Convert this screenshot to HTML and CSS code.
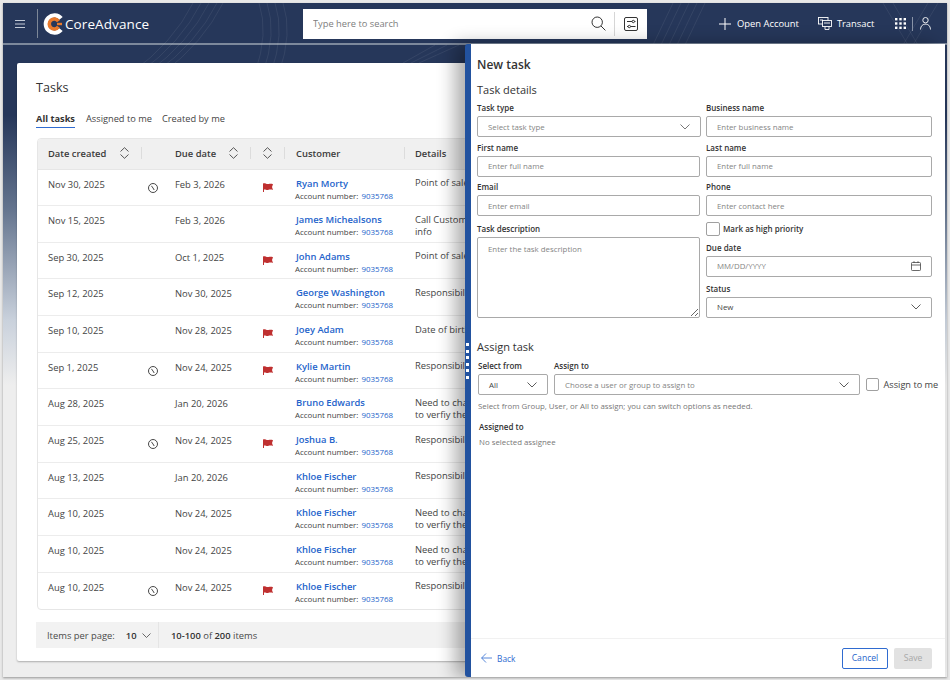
FILE: index.html
```html
<!DOCTYPE html>
<html lang="en">
<head>
<meta charset="utf-8">
<title>Tasks</title>
<link rel="stylesheet" href="styles.css">
</head>
<body>
<div class="frame">
  <svg class="waves" width="944" height="70" viewBox="0 0 944 70" fill="none" stroke="#ffffff" stroke-opacity=".07">
    <path d="M128 70 Q170 40 190 0M136 70 Q178 40 198 0M144 70 Q186 40 206 0M152 70 Q194 40 214 0M160 70 Q200 40 220 0"/>
    <path d="M252 70 Q266 30 256 0M260 70 Q274 30 264 0M268 70 Q282 30 272 0M276 70 Q290 30 280 0"/>
    <path d="M400 60 L432 42M408 60 L444 42M416 60 L456 42"/>
    <path d="M650 42 L670 0M658 42 L678 0M666 42 L686 0M674 42 L694 0M682 42 L702 0"/>
    <path d="M880 0 L905 42M890 0 L915 42M925 0 L900 42M935 0 L910 42"/>
  </svg>
  <header class="topbar">
    <div class="brand">
      <svg class="menu-icon" width="10" height="8" viewBox="0 0 10 8" stroke="#c3cad6" stroke-width="1"><path d="M0 .5H10M0 4H10M0 7.5H10"/></svg>
      <span class="brand-sep"></span>
      <svg class="logo" width="22" height="22" viewBox="0 0 22 22" fill="none">
        <path d="M18 5.4A8.6 8.6 0 1 0 18 16.6" stroke="#fff" stroke-width="4.4"/>
        <path d="M15.4 8.2A5 5 0 1 0 15.4 13.8" stroke="#e8792b" stroke-width="3.6"/>
        <path d="M14 11H19" stroke="#e8792b" stroke-width="2.4"/>
      </svg>
      <span class="brand-name">CoreAdvance</span>
    </div>
    <div class="search">
      <input class="search-input" type="text" placeholder="Type here to search">
      <svg class="search-icon" width="15" height="15" viewBox="0 0 15 15" fill="none" stroke="#333" stroke-width="1"><circle cx="6.2" cy="6.2" r="5.2"/><path d="M10 10L14.4 14.4"/></svg>
      <span class="search-sep"></span>
      <svg class="filter-icon" width="14" height="14" viewBox="0 0 14 14" fill="none" stroke="#333" stroke-width="1"><rect x=".5" y=".5" width="13" height="13" rx="1.5"/><path d="M3 4.5H8M10.6 4.5H11.5M3 9.5H4M6.6 9.5H11.5"/><circle cx="9.3" cy="4.5" r="1.2"/><circle cx="5.3" cy="9.5" r="1.2"/></svg>
    </div>
    <nav class="actions">
      <a class="action action-open">
        <svg width="12" height="12" viewBox="0 0 12 12" stroke="#fff" stroke-width="1"><path d="M6 0V12M0 6H12"/></svg>
        Open Account
      </a>
      <a class="action action-transact">
        <svg width="14" height="13" viewBox="0 0 14 13" fill="none" stroke="#fff" stroke-width=".9"><rect x=".5" y=".5" width="9.5" height="6.5"/><rect x="4.5" y="3.5" width="9" height="6" fill="#26375a"/><path d="M2 3H5M6 6H12M7 9.5V12.5H11V9.5"/></svg>
        Transact
      </a>
      <svg class="apps" width="11" height="11" viewBox="0 0 11 11" fill="#fff"><rect width="2.4" height="2.4"/><rect x="4.3" width="2.4" height="2.4"/><rect x="8.6" width="2.4" height="2.4"/><rect y="4.3" width="2.4" height="2.4"/><rect x="4.3" y="4.3" width="2.4" height="2.4"/><rect x="8.6" y="4.3" width="2.4" height="2.4"/><rect y="8.6" width="2.4" height="2.4"/><rect x="4.3" y="8.6" width="2.4" height="2.4"/><rect x="8.6" y="8.6" width="2.4" height="2.4"/></svg>
      <span class="action-sep"></span>
      <svg class="user" width="11" height="13" viewBox="0 0 11 13" fill="none" stroke="#fff" stroke-width=".9"><circle cx="5.5" cy="3.2" r="2.7"/><path d="M.5 12.5C.8 8.5 3 7.2 5.5 7.2S10.2 8.5 10.5 12.5"/></svg>
    </nav>
  </header>

  <main class="backdrop">
    <section class="card">
      <h1 class="card-title">Tasks</h1>
      <div class="tabs">
        <span class="tab tab-active">All tasks</span>
        <span class="tab">Assigned to me</span>
        <span class="tab">Created by me</span>
      </div>
      <div class="table">
        <div class="thead">
          <div class="th th-created">Date created <svg class="sort" width="9" height="12" viewBox="0 0 9 12" fill="none" stroke="#444" stroke-width=".9"><path d="M.5 4.5L4.5 .7L8.5 4.5M.5 7.5L4.5 11.3L8.5 7.5"/></svg></div>
          <div class="th th-due">Due date <svg class="sort" width="9" height="12" viewBox="0 0 9 12" fill="none" stroke="#444" stroke-width=".9"><path d="M.5 4.5L4.5 .7L8.5 4.5M.5 7.5L4.5 11.3L8.5 7.5"/></svg></div>
          <div class="th th-flag"><svg class="sort" width="9" height="12" viewBox="0 0 9 12" fill="none" stroke="#444" stroke-width=".9"><path d="M.5 4.5L4.5 .7L8.5 4.5M.5 7.5L4.5 11.3L8.5 7.5"/></svg></div>
          <div class="th th-customer">Customer</div>
          <div class="th th-details">Details</div>
        </div>

        <div class="row"><div class="td">Nov 30, 2025</div><div class="td-icon"><svg class="clock" width="10" height="10" viewBox="0 0 10 10" fill="none" stroke="#333" stroke-width=".9"><circle cx="5" cy="5" r="4.5"/><path d="M3.4 2.8L5 5L6.2 7"/></svg></div><div class="td">Feb 3, 2026</div><div class="td-icon td-flag"><svg class="flag" width="10" height="9" viewBox="0 0 10 9"><path d="M0 0.6C2-.4 3.5 1.4 5.5 1C7 .8 8.5.6 10 1.2L9 4L10 7C8 6.4 6.5 6.6 5 7C3.4 7.3 2 6 1 6.6V9H0Z" fill="#bf3030"/></svg></div><div class="td-cust"><a class="name">Ryan Morty</a><div class="acct">Account number: <a class="acct-no">9035768</a></div></div><div class="td-detail">Point of sale</div></div>

        <div class="row"><div class="td">Nov 15, 2025</div><div class="td-icon"></div><div class="td">Feb 3, 2026</div><div class="td-icon td-flag"></div><div class="td-cust"><a class="name">James Michealsons</a><div class="acct">Account number: <a class="acct-no">9035768</a></div></div><div class="td-detail">Call Customer<br>info</div></div>

        <div class="row"><div class="td">Sep 30, 2025</div><div class="td-icon"></div><div class="td">Oct 1, 2025</div><div class="td-icon td-flag"><svg class="flag" width="10" height="9" viewBox="0 0 10 9"><path d="M0 0.6C2-.4 3.5 1.4 5.5 1C7 .8 8.5.6 10 1.2L9 4L10 7C8 6.4 6.5 6.6 5 7C3.4 7.3 2 6 1 6.6V9H0Z" fill="#bf3030"/></svg></div><div class="td-cust"><a class="name">John Adams</a><div class="acct">Account number: <a class="acct-no">9035768</a></div></div><div class="td-detail">Point of sale</div></div>

        <div class="row"><div class="td">Sep 12, 2025</div><div class="td-icon"></div><div class="td">Nov 30, 2025</div><div class="td-icon td-flag"></div><div class="td-cust"><a class="name">George Washington</a><div class="acct">Account number: <a class="acct-no">9035768</a></div></div><div class="td-detail">Responsibility</div></div>

        <div class="row"><div class="td">Sep 10, 2025</div><div class="td-icon"></div><div class="td">Nov 28, 2025</div><div class="td-icon td-flag"><svg class="flag" width="10" height="9" viewBox="0 0 10 9"><path d="M0 0.6C2-.4 3.5 1.4 5.5 1C7 .8 8.5.6 10 1.2L9 4L10 7C8 6.4 6.5 6.6 5 7C3.4 7.3 2 6 1 6.6V9H0Z" fill="#bf3030"/></svg></div><div class="td-cust"><a class="name">Joey Adam</a><div class="acct">Account number: <a class="acct-no">9035768</a></div></div><div class="td-detail">Date of birth</div></div>

        <div class="row"><div class="td">Sep 1, 2025</div><div class="td-icon"><svg class="clock" width="10" height="10" viewBox="0 0 10 10" fill="none" stroke="#333" stroke-width=".9"><circle cx="5" cy="5" r="4.5"/><path d="M3.4 2.8L5 5L6.2 7"/></svg></div><div class="td">Nov 24, 2025</div><div class="td-icon td-flag"><svg class="flag" width="10" height="9" viewBox="0 0 10 9"><path d="M0 0.6C2-.4 3.5 1.4 5.5 1C7 .8 8.5.6 10 1.2L9 4L10 7C8 6.4 6.5 6.6 5 7C3.4 7.3 2 6 1 6.6V9H0Z" fill="#bf3030"/></svg></div><div class="td-cust"><a class="name">Kylie Martin</a><div class="acct">Account number: <a class="acct-no">9035768</a></div></div><div class="td-detail">Responsibility</div></div>

        <div class="row"><div class="td">Aug 28, 2025</div><div class="td-icon"></div><div class="td">Jan 20, 2026</div><div class="td-icon td-flag"></div><div class="td-cust"><a class="name">Bruno Edwards</a><div class="acct">Account number: <a class="acct-no">9035768</a></div></div><div class="td-detail">Need to change<br>to verfiy the</div></div>

        <div class="row"><div class="td">Aug 25, 2025</div><div class="td-icon"><svg class="clock" width="10" height="10" viewBox="0 0 10 10" fill="none" stroke="#333" stroke-width=".9"><circle cx="5" cy="5" r="4.5"/><path d="M3.4 2.8L5 5L6.2 7"/></svg></div><div class="td">Nov 24, 2025</div><div class="td-icon td-flag"><svg class="flag" width="10" height="9" viewBox="0 0 10 9"><path d="M0 0.6C2-.4 3.5 1.4 5.5 1C7 .8 8.5.6 10 1.2L9 4L10 7C8 6.4 6.5 6.6 5 7C3.4 7.3 2 6 1 6.6V9H0Z" fill="#bf3030"/></svg></div><div class="td-cust"><a class="name">Joshua B.</a><div class="acct">Account number: <a class="acct-no">9035768</a></div></div><div class="td-detail">Responsibility</div></div>

        <div class="row"><div class="td">Aug 13, 2025</div><div class="td-icon"></div><div class="td">Jan 20, 2026</div><div class="td-icon td-flag"></div><div class="td-cust"><a class="name">Khloe Fischer</a><div class="acct">Account number: <a class="acct-no">9035768</a></div></div><div class="td-detail">Responsibility</div></div>

        <div class="row"><div class="td">Aug 10, 2025</div><div class="td-icon"></div><div class="td">Nov 24, 2025</div><div class="td-icon td-flag"></div><div class="td-cust"><a class="name">Khloe Fischer</a><div class="acct">Account number: <a class="acct-no">9035768</a></div></div><div class="td-detail">Need to change<br>to verfiy the</div></div>

        <div class="row"><div class="td">Aug 10, 2025</div><div class="td-icon"></div><div class="td">Nov 24, 2025</div><div class="td-icon td-flag"></div><div class="td-cust"><a class="name">Khloe Fischer</a><div class="acct">Account number: <a class="acct-no">9035768</a></div></div><div class="td-detail">Need to change<br>to verfiy the</div></div>

        <div class="row row-last"><div class="td">Aug 10, 2025</div><div class="td-icon"><svg class="clock" width="10" height="10" viewBox="0 0 10 10" fill="none" stroke="#333" stroke-width=".9"><circle cx="5" cy="5" r="4.5"/><path d="M3.4 2.8L5 5L6.2 7"/></svg></div><div class="td">Nov 24, 2025</div><div class="td-icon td-flag"><svg class="flag" width="10" height="9" viewBox="0 0 10 9"><path d="M0 0.6C2-.4 3.5 1.4 5.5 1C7 .8 8.5.6 10 1.2L9 4L10 7C8 6.4 6.5 6.6 5 7C3.4 7.3 2 6 1 6.6V9H0Z" fill="#bf3030"/></svg></div><div class="td-cust"><a class="name">Khloe Fischer</a><div class="acct">Account number: <a class="acct-no">9035768</a></div></div><div class="td-detail">Responsibility</div></div>
      </div>
      <div class="pager">
        <div class="pager-size">Items per page: <b class="pager-num">10</b>
          <svg width="9" height="5" viewBox="0 0 9 5" fill="none" stroke="#444" stroke-width=".8"><path d="M.5 .5L4.5 4.5L8.5 .5"/></svg>
        </div>
        <div class="pager-count"><b>10-100</b> of <b>200</b> items</div>
      </div>
    </section>
  </main>

  <aside class="panel">
    <span class="grip"><i></i><i></i><i></i><i></i><i></i><i></i></span>
    <div class="panel-body">
      <h2 class="panel-title">New task</h2>
      <h3 class="section-title">Task details</h3>
      <div class="form-grid">
        <div class="field"><label class="label">Task type</label>
          <div class="control select select-wide"><span class="ph">Select task type</span><svg width="10" height="6" viewBox="0 0 10 6" fill="none" stroke="#555" stroke-width=".8"><path d="M.5 .5L5 5L9.5 .5"/></svg></div></div>
        <div class="field"><label class="label">Business name</label><input class="control input" type="text" placeholder="Enter business name"></div>
        <div class="field"><label class="label">First name</label><input class="control input" type="text" placeholder="Enter full name"></div>
        <div class="field"><label class="label">Last name</label><input class="control input" type="text" placeholder="Enter full name"></div>
        <div class="field"><label class="label">Email</label><input class="control input" type="text" placeholder="Enter email"></div>
        <div class="field"><label class="label">Phone</label><input class="control input" type="text" placeholder="Enter contact here"></div>
        <div class="field field-desc"><label class="label">Task description</label><textarea class="control textarea" placeholder="Enter the task description"></textarea></div>
        <div class="field-stack">
          <div class="check-row"><span class="checkbox"></span><span class="label">Mark as high priority</span></div>
          <div class="field"><label class="label">Due date</label>
            <div class="control select"><span class="ph">MM/DD/YYYY</span><svg width="10" height="10" viewBox="0 0 10 10" fill="none" stroke="#444" stroke-width=".8"><rect x=".5" y="1.5" width="9" height="8" rx=".8"/><path d="M.5 4H9.5M3 .2V2M7 .2V2"/></svg></div></div>
          <div class="field field-status"><label class="label">Status</label>
            <div class="control select"><span class="val">New</span><svg width="10" height="6" viewBox="0 0 10 6" fill="none" stroke="#333" stroke-width=".8"><path d="M.5 .5L5 5L9.5 .5"/></svg></div></div>
        </div>
      </div>

      <h3 class="section-title section-assign">Assign task</h3>
      <div class="assign-row">
        <div class="field field-from"><label class="label">Select from</label>
          <div class="control select"><span class="val">All</span><svg width="10" height="6" viewBox="0 0 10 6" fill="none" stroke="#333" stroke-width=".8"><path d="M.5 .5L5 5L9.5 .5"/></svg></div></div>
        <div class="field field-to"><label class="label">Assign to</label>
          <div class="control select"><span class="ph">Choose a user or group to assign to</span><svg width="10" height="6" viewBox="0 0 10 6" fill="none" stroke="#333" stroke-width=".8"><path d="M.5 .5L5 5L9.5 .5"/></svg></div></div>
        <div class="assign-me"><span class="checkbox checkbox-sm"></span><span class="assign-text">Assign to me</span></div>
      </div>
      <p class="help">Select from Group, User, or All to assign; you can switch options as needed.</p>
      <div class="assigned">
        <div class="label">Assigned to</div>
        <div class="none">No selected assignee</div>
      </div>
    </div>
    <footer class="panel-foot">
      <a class="back"><svg width="11" height="10" viewBox="0 0 11 10" fill="none" stroke="#2f6bd0" stroke-width=".8"><path d="M5 .5L.6 5L5 9.5M.6 5H11"/></svg>Back</a>
      <div class="foot-btns">
        <button class="btn btn-cancel" type="button">Cancel</button>
        <button class="btn btn-save" type="button">Save</button>
      </div>
    </footer>
  </aside>
</div>
</body>
</html>
```

FILE: styles.css
```css
* { box-sizing: border-box; }
html, body { margin: 0; padding: 0; height: 100%; overflow: hidden; }
body {
  background: #e8e8e8;
  font-family: "Open Sans", "Noto Sans", sans-serif;
  color: #333;
  padding: 3px;
}
.frame {
  position: relative;
  width: 944px;
  height: 674px;
  overflow: hidden;
  background: #eeeeee;
  box-shadow: 0 1px 2px rgba(0,0,0,.35);
  display: flex;
  flex-direction: column;
}
.waves { position: absolute; left: 0; top: 0; z-index: 1; pointer-events: none; }

/* header */
.topbar {
  flex: none;
  height: 42px;
  background: #26375a;
  border-bottom: 2px solid #7d899c;
  display: flex;
  align-items: center;
  padding: 1px 0 0 12px;
  position: relative;
}
.brand { display: flex; align-items: center; width: 288px; flex: none; }
.menu-icon { flex: none; }
.brand-sep { width: 1px; height: 29px; background: #7d8898; margin: 0 5px 0 12px; }
.logo { flex: none; }
.brand-name { color: #fff; font-size: 13.5px; margin-left: 0; letter-spacing: .1px; white-space: nowrap; }
.search {
  position: relative;
  z-index: 2;
  width: 344px;
  height: 30px;
  background: #fff;
  display: flex;
  align-items: center;
  flex: none;
}
.search-input {
  flex: 1;
  min-width: 0;
  height: 100%;
  border: 0;
  outline: 0;
  background: transparent;
  padding: 0 0 0 10px;
  font: 9.3px "Open Sans", sans-serif;
}
.search-input::placeholder { color: #7d7d7d; opacity: 1; }
.search-icon { flex: none; margin-right: 8px; }
.search-sep { width: 1px; height: 24px; background: #d6d6d6; margin-right: 9px; }
.filter-icon { flex: none; margin-right: 9px; }
.actions { display: flex; align-items: center; margin-left: 72px; color: #fff; font-size: 9.4px; position: relative; z-index: 2; }
.action { display: flex; align-items: center; white-space: nowrap; font-weight: 500; }
.action svg { margin-right: 6px; }
.action-open { margin-right: 19px; }
.action-transact svg { margin-right: 5px; }
.action-transact { margin-right: 21px; }
.action-sep { width: 1px; height: 14px; background: #8994a8; margin: 0 7px 0 6px; }

/* backdrop + card */
.backdrop {
  flex: 1;
  min-height: 0;
  padding: 18px 12px 16px 14px;
  background: linear-gradient(#26375a 0, #26375a 70px, #65758f 165px, #c9d1dc 275px, #eeeeee 340px);
}
.card {
  position: relative;
  height: 598px;
  background: #fff;
  border-radius: 2px;
  box-shadow: 0 1px 2px rgba(0,0,0,.28);
  padding: 14px 0 0 19px;
}
.card-title { margin: 0; font-size: 12.6px; line-height: 22px; font-weight: 500; color: #333; }
.tabs { display: flex; gap: 10px; margin-top: 9px; height: 20px; font-size: 9.25px; }
.tab { color: #444; line-height: 21px; height: 20px; }
.tab-active { font-weight: 700; color: #333; border-bottom: 1px solid #2f6bd0; margin-right: 1px; }

.table {
  margin: 10px 0 0 1px;
  width: 880px;
  height: 472px;
  border: 1px solid #e6e6e6;
  border-radius: 4px;
  overflow: hidden;
}
.thead, .row {
  display: grid;
  grid-template-columns: 103px 34px 75px 34px 120px 1fr;
}
.thead {
  height: 31.5px;
  background: #f0f0f0;
  border-bottom: 1px solid #e6e6e6;
  font-size: 9.4px;
  font-weight: 600;
  color: #3b3b3b;
  align-items: center;
  margin-top: -1px;
}
.th { height: 12px; display: flex; align-items: center; white-space: nowrap; justify-content: space-between; border-left: 1px solid #dcdcdc; }
.th-created { padding: 0 12px 0 10px; border-left: 0; }
.th-due { grid-column: 2 / 4; padding: 0 12px 0 33px; }
.th-flag { padding: 0 11px; justify-content: center; }
.th-customer { padding-left: 11px; }
.th-details { padding-left: 10px; }

.row {
  height: 36.67px;
  border-bottom: 1px solid #ececec;
  font-size: 9.4px;
  color: #444;
  padding-top: 7px;
}
.row-last { border-bottom: 0; }
.td { padding-left: 10px; line-height: 15px; white-space: nowrap; }
.td + .td-icon + .td { padding-left: 0; }
.td-icon { padding: 6px 0 0 7px; line-height: 0; }
.td-flag { padding-left: 13px; }
.td-cust { padding-left: 12px; white-space: nowrap; margin-top: -1px; }
.name { display: block; color: #2464cb; font-weight: 600; line-height: 15px; font-size: 9.4px; }
.acct { font-size: 7.9px; line-height: 11px; color: #444; margin-left: -1px; }
.acct-no { color: #2464cb; margin-left: 1px; }
.td-detail { padding-left: 11px; line-height: 12.5px; white-space: nowrap; padding-top: .5px; }

.pager {
  margin: 12px 0 0 0;
  width: 880px;
  height: 26px;
  background: #f2f2f2;
  display: flex;
  align-items: center;
  font-size: 9.4px;
  color: #4a4a4a;
}
.pager-size { width: 123px; height: 100%; padding-left: 11px; display: flex; align-items: center; border-right: 1px solid #e5e5e5; white-space: nowrap; }
.pager-num { font-weight: 600; color: #333; margin: 0 5px 0 11px; }
.pager-count { padding-left: 12px; white-space: nowrap; }
.pager-count b { font-weight: 600; color: #333; }

/* side panel */
.panel {
  position: absolute;
  z-index: 3;
  top: 41px;
  left: 462px;
  width: 480px;
  height: 633px;
  background: #fff;
  border-left: 6px solid #22529f;
  border-radius: 3px 0 0 3px;
  box-shadow: -10px 0 18px rgba(0,0,0,.32);
  display: flex;
  flex-direction: column;
}
.grip {
  position: absolute;
  left: -5px;
  top: 299px;
  display: flex;
  flex-direction: column;
  gap: 3.6px;
}
.grip i { display: block; width: 3px; height: 3px; background: #fff; }
.panel-body { flex: 1; min-height: 0; padding: 11px 13px 0 6px; }
.panel-title { margin: 0; font-size: 12px; line-height: 20px; font-weight: 600; color: #333; }
.section-title { margin: 6px 0 0; font-size: 11px; line-height: 18px; font-weight: 500; color: #333; }
.form-grid {
  display: grid;
  grid-template-columns: 223px 226px;
  column-gap: 6px;
  row-gap: 1.5px;
}
.field { display: flex; flex-direction: column; }
.label { font-size: 8px; line-height: 17px; height: 17px; font-weight: 600; color: #333; white-space: nowrap; }
.control {
  width: 100%;
  height: 21px;
  border: 1px solid #a9a9a9;
  border-radius: 2px;
  background: #fff;
  font: 7.85px "Open Sans", sans-serif;
  padding: 0 10px;
  outline: 0;
  color: #444;
}
.input::placeholder, .textarea::placeholder { color: #858585; opacity: 1; }
.select { display: flex; align-items: center; justify-content: space-between; }
.select-wide { width: 224px; }
.ph { color: #858585; }
.val { color: #444; }
.field-desc { margin-top: 2.5px; }
.textarea { height: 81px; display: block; padding: 6px 10px; resize: both; }
.field-stack { display: flex; flex-direction: column; margin-top: 2.5px; }
.check-row { display: flex; align-items: center; gap: 3px; height: 17px; margin-bottom: 1.5px; }
.checkbox { width: 14px; height: 14px; border: 1px solid #a0a0a0; border-radius: 2px; background: #fff; flex: none; }
.field-status { margin-top: 3px; }
.section-assign { margin: 20px 0 1px; }
.assign-row { display: flex; align-items: flex-end; }
.field-from { width: 70px; margin-left: 1px; margin-right: 6px; flex: none; }
.field-to { width: 306px; margin-right: 5.5px; flex: none; }
.assign-me { display: flex; align-items: center; height: 21px; gap: 5px; }
.checkbox-sm { width: 13px; height: 13px; }
.assign-text { font-size: 9.2px; color: #444; white-space: nowrap; }
.help { margin: 5px 0 0 1px; font-size: 7.85px; line-height: 12px; color: #777; white-space: nowrap; }
.assigned { margin: 6px 0 0 2px; }
.none { font-size: 7.85px; line-height: 12px; color: #777; margin-top: 1px; }
.panel-foot {
  flex: none;
  height: 39px;
  border-top: 1px solid #f1f1f1;
  display: flex;
  align-items: center;
  justify-content: space-between;
  padding: 0 13px 0 10px;
}
.back { display: flex; align-items: center; gap: 5px; color: #2f6bd0; font-size: 8.4px; font-weight: 500; }
.foot-btns { display: flex; gap: 6px; }
.btn { height: 21px; border-radius: 2px; font: 500 8.6px "Open Sans", sans-serif; padding: 0; }
.btn-cancel { width: 46px; background: #fff; color: #2464cb; border: 1px solid #2f6bd0; }
.btn-save { width: 38px; background: #e2e2e2; color: #a8a8a8; border: 0; }
```
